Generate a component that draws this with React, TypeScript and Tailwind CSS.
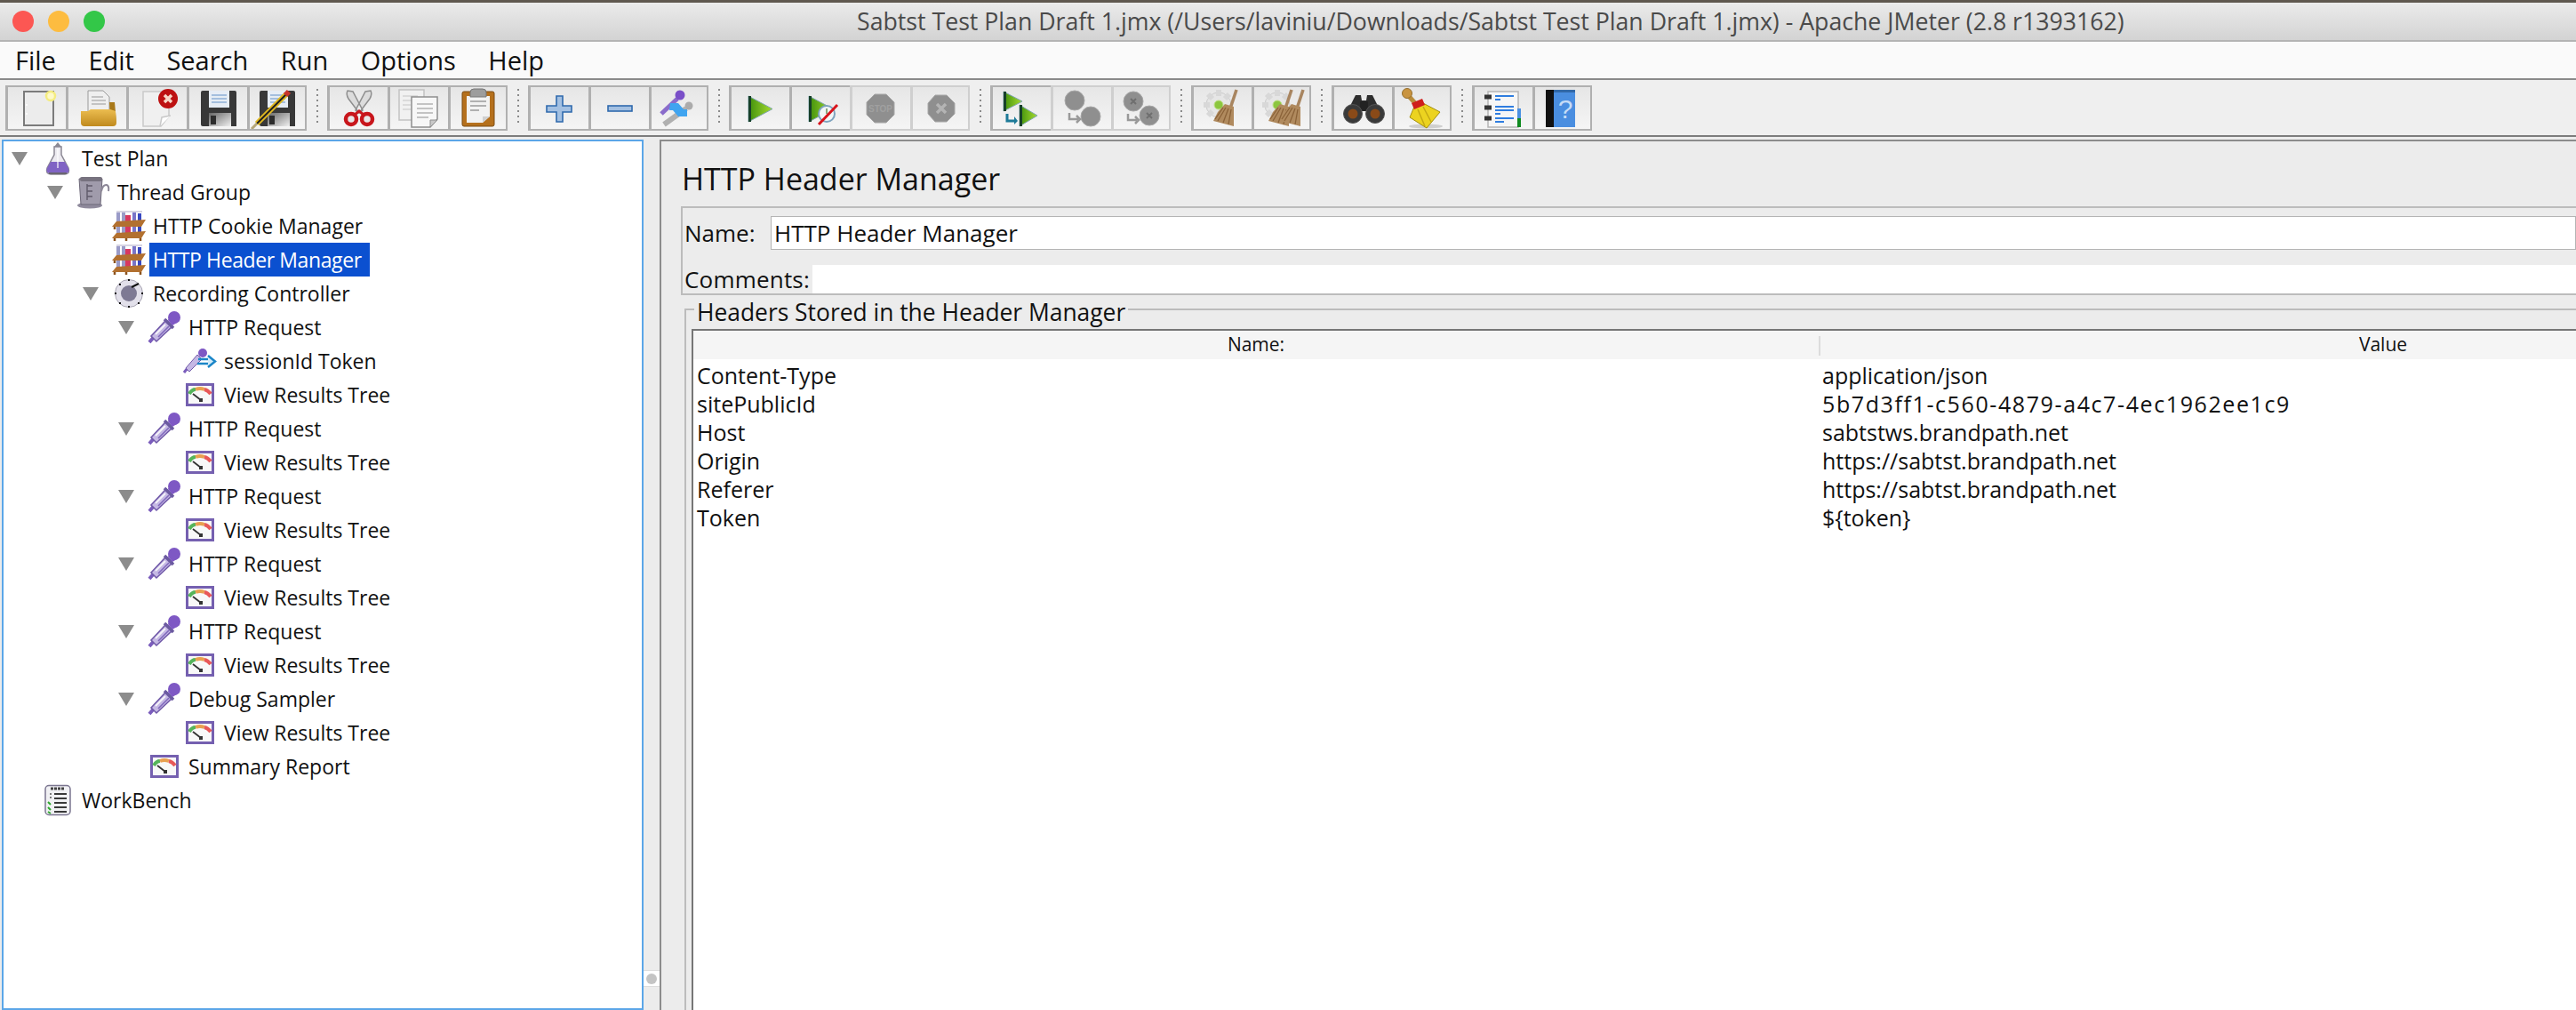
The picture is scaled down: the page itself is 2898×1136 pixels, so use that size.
import type { ReactNode } from "react";

const Svg = ({ children }: { children: ReactNode }) => (
  <svg width="64" height="47" viewBox="0 0 64 47" className="block shrink-0">
    {children}
  </svg>
);

const Play = ({ x = 18, y = 10, w = 27, h = 29 }) => (
  <g>
    <polygon points={`${x},${y} ${x + w},${y + h / 2} ${x},${y + h}`} fill="url(#playG)" stroke="#7fa6b0" strokeWidth="1" />
    <rect x={x} y={y} width="3" height={h} fill="#17402a" />
  </g>
);

const DiskBody = () => (
  <g>
    <path d="M12 6 Q12 4 14 4 H50 Q52 4 52 6 V44 H14 Q12 44 12 42 Z" fill="#383838" />
    <rect x="21" y="4" width="23" height="19" fill="#e6edf5" />
    <path d="M24 9 H41 M24 13 H41 M24 17 H41" stroke="#8fb0d6" strokeWidth="1.6" />
    <rect x="21" y="29" width="25" height="15" fill="url(#shutterG)" />
    <rect x="23" y="32" width="6" height="10" fill="#2c2c2c" />
  </g>
);

const Broom = ({ dx = 0 }: { dx?: number }) => (
  <g transform={`translate(${dx} 0)`}>
    <path d="M47 3 L40 24" stroke="#a88560" strokeWidth="3.5" />
    <polygon points="34,19 44,22 44,44 21,38 26,28" fill="#b08a5e" />
    <path d="M35 23 L26 38 M38 24 L32 40 M41 25 L38 42 M32 23 L23 36" stroke="#8a6238" strokeWidth="1.3" />
  </g>
);

const Gear = () => (
  <g>
    <circle cx="27" cy="20" r="14" fill="#e6e6e6" stroke="#cacaca" />
    <path d="M27 3 V10 M10 20 H17 M15 8 L20 13 M39 8 L34 13 M15 32 L20 27" stroke="#d8d8d8" strokeWidth="6" />
    <circle cx="27" cy="20" r="5" fill="#8cc63f" stroke="#bfe08a" />
  </g>
);

const Gray = ({ cx, cy, r }: { cx: number; cy: number; r: number }) => (
  <circle cx={cx} cy={cy} r={r} fill="#8f8f8f" stroke="#a8a8a8" />
);

const toolIcons: Record<string, ReactNode> = {
  newPlan: (
    <Svg>
      <rect x="17" y="5" width="33" height="38" fill="#ececec" stroke="#7b7b7b" strokeWidth="2" />
      <circle cx="20" cy="20" r="1" fill="#fff" />
      <circle cx="20" cy="30" r="1" fill="#fff" />
      <circle cx="47" cy="10" r="5" fill="#fdf9c8" stroke="#f4ec80" strokeWidth="2.5" />
    </Svg>
  ),
  open: (
    <Svg>
      <polygon points="21,4 38,4 45,11 45,28 21,28" fill="#efefef" stroke="#9a9a9a" />
      <path d="M25 11 H38 M25 15 H41 M25 19 H41" stroke="#b5b5b5" strokeWidth="1.4" />
      <polygon points="45,17 51,17 53,40 46,40" fill="#a9791a" />
      <path d="M13 27 H21 L24 25 H46 L52 27 L53 40 Q53 44 49 44 H17 Q13 44 13 40 Z" fill="url(#folderG)" />
    </Svg>
  ),
  close: (
    <Svg>
      <path d="M15 5 H44 V33 L35 44 H15 Z" fill="#f0f0f0" stroke="#c9c9c9" strokeWidth="1.5" />
      <path d="M34 44 L36 34 L46 32" fill="#fff" stroke="#c9c9c9" strokeWidth="1.5" />
      <circle cx="43" cy="13" r="11" fill="#bd1212" />
      <path d="M39 9 L47 17 M47 9 L39 17" stroke="#f7d8c8" strokeWidth="3.5" />
    </Svg>
  ),
  save: (
    <Svg>
      <DiskBody />
    </Svg>
  ),
  saveAs: (
    <Svg>
      <DiskBody />
      <path d="M9 41 L42 8" stroke="#e0b820" strokeWidth="6" />
      <path d="M9 41 L42 8" stroke="#1f1f1f" strokeWidth="2" />
      <path d="M41 9 L45 5" stroke="#c8342c" strokeWidth="6" />
      <path d="M3 47 L9 41" stroke="#b5a77a" strokeWidth="3" />
    </Svg>
  ),
  cut: (
    <Svg>
      <path d="M19 4 Q17 8 20 13 L32 29 L36 26 L25 5 Z M45 4 Q47 8 44 13 L32 29 L28 26 L39 5 Z" fill="#dcdcdc" stroke="#8e8e8e" strokeWidth="1.5" />
      <ellipse cx="23" cy="36" rx="6" ry="6" fill="#e8e8e8" stroke="#c8161c" strokeWidth="4.5" />
      <ellipse cx="41" cy="36" rx="6" ry="6" fill="#e8e8e8" stroke="#c8161c" strokeWidth="4.5" />
      <path d="M27 31 L32 27 L37 31" stroke="#c8161c" strokeWidth="3" fill="none" />
    </Svg>
  ),
  copy: (
    <Svg>
      <rect x="9" y="3" width="28" height="34" fill="#f1f1f1" stroke="#c2c2c2" strokeWidth="1.5" />
      <path d="M13 10 H30 M13 15 H30 M13 20 H22 M13 25 H22" stroke="#d4d4d4" strokeWidth="1.4" />
      <path d="M23 11 H52 V36 L44 45 H23 Z" fill="#f7f7f7" stroke="#8e8e8e" strokeWidth="1.5" />
      <path d="M29 19 H47 M29 24 H47 M29 29 H47 M29 34 H42" stroke="#b2b2b2" strokeWidth="1.6" />
      <path d="M44 45 V37 H52 Z" fill="#c8c8c8" stroke="#8e8e8e" />
    </Svg>
  ),
  paste: (
    <Svg>
      <rect x="14" y="5" width="36" height="39" rx="2" fill="#b5701c" stroke="#7d4c12" />
      <path d="M19 10 H45 V33 L37 40 H19 Z" fill="#f2f2f2" />
      <path d="M37 40 V33 H45 Z" fill="#cfcfcf" />
      <path d="M23 16 H41 M23 21 H41 M23 26 H33" stroke="#9a9a9a" strokeWidth="1.6" />
      <path d="M23 11 V6 Q23 2 27 2 H37 Q41 2 41 6 V11 Z" fill="#9d9d9d" stroke="#777" />
    </Svg>
  ),
  add: (
    <Svg>
      <path d="M28 10 H35 V21 H45 V28 H35 V39 H28 V28 H17 V21 H28 Z" fill="#a3c0e2" stroke="#2f69ad" strokeWidth="1.6" />
    </Svg>
  ),
  remove: (
    <Svg>
      <rect x="18" y="21" width="27" height="6" fill="#a3c0e2" stroke="#2f69ad" strokeWidth="1.6" />
    </Svg>
  ),
  toggle: (
    <Svg>
      <path d="M12 30 L30 13" stroke="#8a6ccb" strokeWidth="5" />
      <circle cx="33" cy="9" r="5.5" fill="#7a4fc8" />
      <path d="M15 42 L40 24" stroke="#b0b0b0" strokeWidth="6" />
      <circle cx="43" cy="21" r="4.5" fill="#ababab" />
      <path d="M22 18 H31 L37 25 H41 V33 H31 L25 26 H21 Z" fill="#3fa4f0" />
    </Svg>
  ),
  start: (
    <Svg>
      <Play />
    </Svg>
  ),
  startNoTimer: (
    <Svg>
      <Play />
      <circle cx="38" cy="30" r="9" fill="#f2f6f7" stroke="#7ea3be" strokeWidth="2" />
      <path d="M38 24 V30" stroke="#6a8f5a" strokeWidth="1.5" />
      <path d="M29 42 L50 20" stroke="#d8141c" strokeWidth="3" />
    </Svg>
  ),
  stop: (
    <Svg>
      <polygon points="24,8 37,8 46,17 46,31 37,40 24,40 15,31 15,17" fill="#8f8f8f" stroke="#a8a8a8" />
      <text x="30.5" y="28" textAnchor="middle" fontSize="10" fontWeight="700" fill="#a0a0a0" fontFamily="Liberation Sans, sans-serif">STOP</text>
    </Svg>
  ),
  shutdown: (
    <Svg>
      <polygon points="26,9 39,9 48,18 48,30 39,39 26,39 18,30 18,18" fill="#8f8f8f" stroke="#a8a8a8" />
      <path d="M28 19 L38 29 M38 19 L28 29" stroke="#b4b4b4" strokeWidth="3.5" />
    </Svg>
  ),
  remoteStart: (
    <Svg>
      <Play x={11} y={5} w={21} h={22} />
      <Play x={29} y={20} w={20} h={24} />
      <path d="M15 30 V38 H25" stroke="#1d7a98" strokeWidth="3" fill="none" />
      <path d="M23 33 L27 38 L23 42" fill="#1d7a98" />
    </Svg>
  ),
  remoteStop: (
    <Svg>
      <Gray cx={23} cy={15} r={11} />
      <Gray cx={41} cy={33} r={11} />
      <path d="M17 29 V36 H27 M25 32 L29 36 L25 40" stroke="#999" strokeWidth="2.5" fill="none" />
    </Svg>
  ),
  remoteShutdown: (
    <Svg>
      <Gray cx={23} cy={16} r={11} />
      <Gray cx={41} cy={32} r={11} />
      <path d="M20 13 L26 19 M26 13 L20 19 M38 29 L44 35 M44 29 L38 35" stroke="#6f6f6f" strokeWidth="2" />
      <path d="M17 30 V37 H27 M25 33 L29 37 L25 41" stroke="#999" strokeWidth="2.5" fill="none" />
    </Svg>
  ),
  clear: (
    <Svg>
      <Gear />
      <Broom />
    </Svg>
  ),
  clearAll: (
    <Svg>
      <Gear />
      <Broom dx={-4} />
      <Broom dx={9} />
    </Svg>
  ),
  search: (
    <Svg>
      <path d="M14 27 L23 9 H29 L30 15 H35 L36 9 H42 L51 27 Z" fill="#2e2e2e" />
      <rect x="28" y="16" width="9" height="11" fill="#222" />
      <circle cx="20" cy="30" r="10.5" fill="#3a3a3a" stroke="#555" />
      <circle cx="45" cy="30" r="10.5" fill="#3a3a3a" stroke="#555" />
      <circle cx="20" cy="30" r="5.5" fill="#8a4a18" />
      <circle cx="45" cy="30" r="5.5" fill="#8a4a18" />
    </Svg>
  ),
  resetSearch: (
    <Svg>
      <ellipse cx="36" cy="44" rx="19" ry="2.5" fill="#cfcfcf" />
      <path d="M15 8 L24 18" stroke="#b88c3c" strokeWidth="5" />
      <circle cx="15" cy="7" r="5.5" fill="#c99440" stroke="#96702e" />
      <polygon points="23,22 31,17 52,28 37,46 18,34" fill="#ecd320" stroke="#a48f10" />
      <path d="M27 25 L35 44 M33 22 L42 39" stroke="#c4a914" strokeWidth="1.5" />
      <polygon points="20,18 32,13 35,20 23,25" fill="#cf1e1c" />
    </Svg>
  ),
  functions: (
    <Svg>
      <rect x="14" y="5" width="34" height="40" fill="#f6f6f6" stroke="#b5b5b5" strokeWidth="1.5" />
      <path d="M10 11 H18 M10 23 H18 M10 35 H18" stroke="#333" strokeWidth="5" />
      <path d="M22 10 H43 M22 14 H28 M22 22 H43 M22 26 H43 M22 30 H28 M22 35 H43 M22 39 H32" stroke="#2f7de0" strokeWidth="2" />
      <rect x="47" y="24" width="4" height="11" fill="#4a90e2" />
      <rect x="47" y="35" width="4" height="10" fill="#0f8a1f" />
    </Svg>
  ),
  help: (
    <Svg>
      <path d="M15 3 H46 V45 H15 Z" fill="#4a8ee0" />
      <rect x="13" y="3" width="9" height="42" fill="#111" />
      <path d="M22 3 H46 V6 H22 Z" fill="#3269a8" />
      <text x="35" y="35" textAnchor="middle" fontSize="30" fill="#c6dcf6" fontFamily="Liberation Sans, sans-serif">?</text>
    </Svg>
  ),
};

const toolGroups: { id: string; off?: boolean }[][] = [
  [{ id: "newPlan" }, { id: "open" }, { id: "close" }, { id: "save" }, { id: "saveAs" }],
  [{ id: "cut" }, { id: "copy" }, { id: "paste" }],
  [{ id: "add" }, { id: "remove" }, { id: "toggle" }],
  [{ id: "start" }, { id: "startNoTimer" }, { id: "stop", off: true }, { id: "shutdown", off: true }],
  [{ id: "remoteStart" }, { id: "remoteStop", off: true }, { id: "remoteShutdown", off: true }],
  [{ id: "clear" }, { id: "clearAll" }],
  [{ id: "search" }, { id: "resetSearch" }],
  [{ id: "functions" }, { id: "help" }],
];

function Toolbar() {
  return (
    <div className="flex h-[64px] shrink-0 items-start border-b-2 border-[#7c7c7c] bg-[#efefef] pl-[6px] pt-[6px]">
      {toolGroups.map((group, i) => (
        <div key={i} className="flex items-start">
          {i > 0 && (
            <div className="flex w-[23px] flex-col items-center gap-[4px] pt-[4px]">
              {[0, 1, 2, 3, 4, 5, 6].map((d) => (
                <div key={d} className="h-[2px] w-[2px] bg-[#8a8a8a]" />
              ))}
            </div>
          )}
          <div className="flex">
            {group.map((b) => (
              <div
                key={b.id}
                className={`flex h-[51px] w-[68px] items-center justify-center border-y-2 border-l-[3px] bg-gradient-to-b from-[#e6e6e6] to-[#f5f5f5] last:w-[67px] last:border-r-2 ${
                  b.off ? "border-[#cfcfcf]" : "border-[#b0b0b0]"
                }`}
              >
                {toolIcons[b.id]}
              </div>
            ))}
          </div>
        </div>
      ))}
    </div>
  );
}

const Flask = () => (
  <svg width="30" height="38" viewBox="0 0 30 38">
    <path d="M15 1 L19 6 H11 Z" fill="#8d8b94" />
    <path d="M11 6 H19 V15 L27 30 Q29 37 23 37 H7 Q1 37 3 30 L11 15 Z" fill="#eceaf0" stroke="#8b8894" strokeWidth="1.5" />
    <path d="M7 23 H23 L27 30 Q29 36 23 36 H7 Q1 36 3 30 Z" fill="#8063c4" />
    <path d="M15 8 V30" stroke="#fff" strokeWidth="1.2" />
    <path d="M5 36 H25" stroke="#6a6670" strokeWidth="2" />
  </svg>
);

const Mug = () => (
  <svg width="38" height="38" viewBox="0 0 38 38">
    <ellipse cx="15" cy="34" rx="14" ry="3.5" fill="#8f8a9c" />
    <path d="M3 4 H29 L27 33 H5 Z" fill="#a09bab" stroke="#6d6878" />
    <rect x="4" y="2" width="25" height="5" rx="2" fill="#77727f" />
    <path d="M12 10 V28 M12 12 H18 M12 18 H18 M12 24 H18" stroke="#5f5a6a" strokeWidth="1.4" fill="none" />
    <path d="M28 18 Q30 10 34 11 Q37 12 36 18" stroke="#8d8898" strokeWidth="2" fill="none" />
  </svg>
);

const Rack = () => (
  <svg width="38" height="34" viewBox="0 0 38 34">
    <path d="M7 2 V28 M13 2 V28" stroke="#9a9bc8" strokeWidth="4" />
    <path d="M18 5 V28" stroke="#d8385f" strokeWidth="6" />
    <path d="M25 2 V28" stroke="#7874c8" strokeWidth="4" />
    <path d="M31 3 V28" stroke="#3848c0" strokeWidth="4" />
    <path d="M5 1 H34" stroke="#d6d4e2" strokeWidth="2" />
    <polygon points="0,18 5,12 38,10 33,18" fill="#b2702f" />
    <polygon points="0,31 5,25 38,23 33,31" fill="#b2702f" />
    <path d="M3 18 V21 M3 31 V34 M32 31 V34 M16 31 V34" stroke="#8b531f" strokeWidth="2.5" />
  </svg>
);

const Dial = () => (
  <svg width="34" height="34" viewBox="0 0 34 34">
    <circle cx="17" cy="17" r="15.5" fill="#e2e0ea" stroke="#a9a6b4" />
    <circle cx="17" cy="17" r="9" fill="#7e7a94" />
    <g fill="#111">
      <rect x="16" y="1" width="2" height="2" />
      <rect x="16" y="31" width="2" height="2" />
      <rect x="1" y="16" width="2" height="2" />
      <rect x="31" y="16" width="2" height="2" />
      <rect x="6" y="6" width="2" height="2" />
      <rect x="6" y="27" width="2" height="2" />
      <rect x="27" y="27" width="2" height="2" />
    </g>
    <path d="M20 10 L28 6" stroke="#111" strokeWidth="2" />
  </svg>
);

const Dropper = () => (
  <svg width="38" height="38" viewBox="0 0 38 38">
    <path d="M2 36 L8 29" stroke="#7a5cbc" strokeWidth="4" />
    <path d="M4 29 L21 11 L28 18 L10 35 Z" fill="#c5b8e4" stroke="#7059a8" strokeWidth="1.6" />
    <path d="M9 27 L20 16" stroke="#f4f2f8" strokeWidth="2" />
    <path d="M12 30 L24 18" stroke="#8068bc" strokeWidth="1.6" />
    <path d="M19 10 L29 20" stroke="#6b5aa0" strokeWidth="3.5" />
    <circle cx="30" cy="8" r="7" fill="#7e58c4" />
    <path d="M23 11 L28 17 L36 12 L28 4 Z" fill="#7e58c4" />
  </svg>
);

const Extractor = () => (
  <svg width="38" height="28" viewBox="0 0 38 28">
    <path d="M1 27 L5 22" stroke="#7a5cbc" strokeWidth="3" />
    <path d="M3 22 L16 7 L21 12 L7 26 Z" fill="#c5b8e4" stroke="#7059a8" />
    <circle cx="22" cy="5" r="5" fill="#7e58c4" />
    <path d="M17 12 H28 M16 17 H28" stroke="#1b86c8" strokeWidth="2.4" />
    <path d="M28 8 L36 14.5 L28 21" stroke="#1b86c8" strokeWidth="2.5" fill="#d3ecfa" />
  </svg>
);

const Result = () => (
  <svg width="32" height="26" viewBox="0 0 32 26">
    <rect x="1.5" y="1.5" width="29" height="23" fill="#f8f8f8" stroke="#7560b0" strokeWidth="3" />
    <path d="M4 12 Q7 7 11 7" stroke="#55b45a" strokeWidth="4" fill="none" />
    <path d="M11 7 Q16 5 21 7" stroke="#e8a050" strokeWidth="4" fill="none" />
    <path d="M21 7 Q25 8 28 12" stroke="#e85858" strokeWidth="4" fill="none" />
    <path d="M8 12 L17 19" stroke="#333" strokeWidth="1.8" />
    <rect x="15" y="17" width="4" height="4" fill="#333" />
  </svg>
);

const Clipboard = () => (
  <svg width="30" height="36" viewBox="0 0 30 36">
    <rect x="1" y="1.5" width="28" height="33" rx="4" fill="#f1f1f4" stroke="#7b7690" strokeWidth="1.5" />
    <path d="M7 5 H23" stroke="#444" strokeWidth="3" strokeDasharray="3 1" />
    <path d="M11 11 H25 M11 16 H25 M11 21 H25 M11 26 H25 M11 31 H25" stroke="#3a3a3a" strokeWidth="2" />
    <path d="M4 20 L7 23 M4 26 L7 29 M4 31 L7 33" stroke="#2fa82f" strokeWidth="2" />
    <path d="M6 11 H8 M6 15 H8" stroke="#555" strokeWidth="1.5" />
  </svg>
);

type Row = { label: string; level: 0 | 1 | 2 | 3 | 4; open?: boolean; icon: ReactNode; selected?: boolean };

const levelPad = {
  0: "pl-0",
  1: "pl-[40px]",
  2: "pl-[80px]",
  3: "pl-[120px]",
  4: "pl-[160px]",
};

const vrt: Row = { label: "View Results Tree", level: 4, icon: <Result /> };
const req: Row = { label: "HTTP Request", level: 3, open: true, icon: <Dropper /> };

const rows: Row[] = [
  { label: "Test Plan", level: 0, open: true, icon: <Flask /> },
  { label: "Thread Group", level: 1, open: true, icon: <Mug /> },
  { label: "HTTP Cookie Manager", level: 2, icon: <Rack /> },
  { label: "HTTP Header Manager", level: 2, icon: <Rack />, selected: true },
  { label: "Recording Controller", level: 2, open: true, icon: <Dial /> },
  req,
  { label: "sessionId Token", level: 4, icon: <Extractor /> },
  vrt,
  req,
  vrt,
  req,
  vrt,
  req,
  vrt,
  req,
  vrt,
  { label: "Debug Sampler", level: 3, open: true, icon: <Dropper /> },
  vrt,
  { label: "Summary Report", level: 3, icon: <Result /> },
  { label: "WorkBench", level: 0, icon: <Clipboard /> },
];

function Tree() {
  return (
    <div className="ml-[2px] w-[722px] shrink-0 border-2 border-[#5ba6e8] bg-white text-[23px] text-[#111]">
      {rows.map((row, i) => (
        <div key={i} className={`flex h-[38px] items-center ${levelPad[row.level]}`}>
          <div className="flex w-[42px] shrink-0 pl-[9px]">
            {row.open && (
              <svg width="18" height="15" viewBox="0 0 18 15">
                <polygon points="0,0 18,0 9,15" fill="#8c8c8c" />
              </svg>
            )}
          </div>
          <div className="mr-[4px] flex w-[38px] shrink-0 items-center justify-center">{row.icon}</div>
          <div className={`pl-[4px] leading-[38px] ${row.selected ? "bg-[#0b50d0] pr-[9px] tracking-[-0.4px] text-white" : "pr-[4px]"}`}>
            {row.label}
          </div>
        </div>
      ))}
    </div>
  );
}

const headers = [
  { name: "Content-Type", value: "application/json", spacing: "" },
  { name: "sitePublicId", value: "5b7d3ff1-c560-4879-a4c7-4ec1962ee1c9", spacing: "tracking-[1.6px]" },
  { name: "Host", value: "sabtstws.brandpath.net", spacing: "" },
  { name: "Origin", value: "https://sabtst.brandpath.net", spacing: "" },
  { name: "Referer", value: "https://sabtst.brandpath.net", spacing: "" },
  { name: "Token", value: "${token}", spacing: "" },
];

function HeaderPanel() {
  return (
    <div className="flex min-w-0 flex-1 flex-col overflow-hidden border-l-2 border-t-2 border-[#8c8c8c] text-[#111]">
      <div className="h-[73px] shrink-0 pl-[23px] pt-[19px] text-[34px] leading-[46px]">HTTP Header Manager</div>
      <div className="ml-[22px] h-[100px] shrink-0 border-y-2 border-l-2 border-[#bcbcbc] pl-[2px] text-[26px]">
        <div className="flex h-[54px] items-center pt-[2px]">
          <span className="w-[97px] shrink-0">Name:</span>
          <div className="flex h-[38px] flex-1 items-center border border-[#b4b4b4] bg-white pl-[3px]">HTTP Header Manager</div>
        </div>
        <div className="flex h-[42px] items-end">
          <span className="w-[144px] shrink-0 leading-[32px] tracking-[0.2px]">Comments:</span>
          <div className="h-[32px] flex-1 bg-white" />
        </div>
      </div>
      <div className="relative ml-[26px] mt-[15px] flex min-h-0 flex-1 flex-col border-l-2 border-t-2 border-[#bcbcbc] pl-[6px] pt-[21px]">
        <div className="absolute left-[9px] top-[-13px] bg-[#ececec] px-[3px] text-[26.4px] leading-[30px]">
          Headers Stored in the Header Manager
        </div>
        <div className="flex-1 border-l-2 border-t-2 border-[#767676] bg-white text-[25px]">
          <div className="flex h-[32px] bg-[#f5f5f5] text-[21px]">
            <div className="flex w-[1266px] shrink-0 items-center justify-center">Name:</div>
            <div className="relative flex w-[1270px] shrink-0 items-center justify-center">
              <div className="absolute left-0 top-[6px] h-[22px] w-[2px] bg-[#dcdcdc]" />
              Value
            </div>
          </div>
          <div className="pt-[3px]">
            {headers.map((h) => (
              <div key={h.name} className="flex h-[32px] items-center">
                <div className="w-[1266px] shrink-0 pl-[4px]">{h.name}</div>
                <div className={`shrink-0 pl-[4px] ${h.spacing}`}>{h.value}</div>
              </div>
            ))}
          </div>
        </div>
      </div>
    </div>
  );
}

export default function App() {
  return (
    <div className="flex h-[1136px] w-[2898px] flex-col overflow-hidden bg-[#ececec] font-['Open_Sans',sans-serif]">
      <svg width="0" height="0" className="absolute">
        <defs>
          <linearGradient id="playG" x1="0" y1="0" x2="1" y2="0">
            <stop offset="0" stopColor="#3f8f0c" />
            <stop offset="1" stopColor="#a6dc30" />
          </linearGradient>
          <linearGradient id="folderG" x1="0" y1="0" x2="0" y2="1">
            <stop offset="0" stopColor="#ecbd50" />
            <stop offset="1" stopColor="#c08a1e" />
          </linearGradient>
          <linearGradient id="shutterG" x1="0" y1="0" x2="1" y2="1">
            <stop offset="0" stopColor="#666" />
            <stop offset="1" stopColor="#f0f0f0" />
          </linearGradient>
        </defs>
      </svg>
      <div className="h-[3px] shrink-0 bg-[#5f584f]" />
      <div className="flex h-[44px] shrink-0 items-center border-b-2 border-[#b4b4b4] bg-gradient-to-b from-[#ebebeb] to-[#d3d3d3]">
        <div className="flex w-[964px] shrink-0 gap-[16px] pl-[14px]">
          <div className="h-[24px] w-[24px] rounded-full bg-[#fc5753]" />
          <div className="h-[24px] w-[24px] rounded-full bg-[#fdbc40]" />
          <div className="h-[24px] w-[24px] rounded-full bg-[#33c748]" />
        </div>
        <div className="whitespace-nowrap text-[26.7px] text-[#4a4a4a]">
          Sabtst Test Plan Draft 1.jmx (/Users/laviniu/Downloads/Sabtst Test Plan Draft 1.jmx) - Apache JMeter (2.8 r1393162)
        </div>
      </div>
      <div className="flex h-[43px] shrink-0 items-center gap-[36.5px] border-b-2 border-[#8a8a8a] bg-[#fafafa] pl-[17px] text-[29px] text-[#111]">
        <span>File</span>
        <span>Edit</span>
        <span>Search</span>
        <span>Run</span>
        <span>Options</span>
        <span>Help</span>
      </div>
      <Toolbar />
      <div className="flex min-h-0 flex-1 pt-[3px]">
        <Tree />
        <div className="flex w-[18px] shrink-0 flex-col justify-end pb-[26px]">
          <div className="flex h-[19px] items-center justify-center border-y border-[#dcdcdc] bg-white">
            <div className="h-[12px] w-[12px] rounded-full bg-[#c4c4c4]" />
          </div>
        </div>
        <HeaderPanel />
      </div>
    </div>
  );
}
